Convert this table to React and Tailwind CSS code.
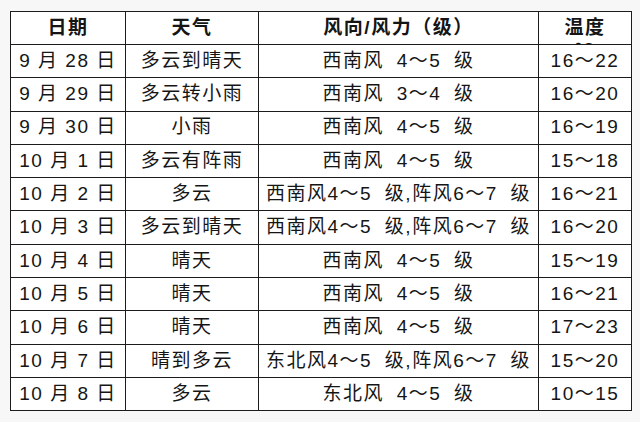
const rows = [
  ["9 月 28 日", "多云到晴天", "西南风 4～5 级", "16～22"],
  ["9 月 29 日", "多云转小雨", "西南风 3～4 级", "16～20"],
  ["9 月 30 日", "小雨", "西南风 4～5 级", "16～19"],
  ["10 月 1 日", "多云有阵雨", "西南风 4～5 级", "15～18"],
  ["10 月 2 日", "多云", "西南风4～5 级,阵风6～7 级", "16～21"],
  ["10 月 3 日", "多云到晴天", "西南风4～5 级,阵风6～7 级", "16～20"],
  ["10 月 4 日", "晴天", "西南风 4～5 级", "15～19"],
  ["10 月 5 日", "晴天", "西南风 4～5 级", "16～21"],
  ["10 月 6 日", "晴天", "西南风 4～5 级", "17～23"],
  ["10 月 7 日", "晴到多云", "东北风4～5 级,阵风6～7 级", "15～20"],
  ["10 月 8 日", "多云", "东北风 4～5 级", "10～15"],
];

const cell = "border-[1.5px] border-[#1c1c1c] text-center align-middle p-0 whitespace-nowrap";

export default function App() {
  return (
    <div
      className="w-[640px] h-[422px] bg-[#f7f7f7] pt-[11px] pl-[10px] text-[#151515]"
      style={{ fontFamily: '"Liberation Sans", "Noto Sans CJK SC", sans-serif' }}
    >
      <table className="border-collapse table-fixed w-[621px] bg-white">
        <colgroup>
          <col className="w-[115px]" />
          <col className="w-[133px]" />
          <col className="w-[280px]" />
          <col className="w-[93px]" />
        </colgroup>
        <thead>
          <tr className="h-[33px] text-[19px] font-bold tracking-[1.5px]">
            <th className={cell}>日期</th>
            <th className={cell}>天气</th>
            <th className={cell}>风向/风力（级）</th>
            <th className={cell}>
              <div className="h-[31px] overflow-hidden leading-[24px] pt-[3px]">
                温度
                <br />
                (℃)
              </div>
            </th>
          </tr>
        </thead>
        <tbody className="text-[19px] tracking-[1.5px]">
          {rows.map((r) => (
            <tr key={r[0]} className="h-[33.3px]">
              <td className={cell}>{r[0]}</td>
              <td className={cell}>{r[1]}</td>
              <td className={cell + " [word-spacing:6px]"}>{r[2]}</td>
              <td className={cell}>{r[3]}</td>
            </tr>
          ))}
        </tbody>
      </table>
    </div>
  );
}
